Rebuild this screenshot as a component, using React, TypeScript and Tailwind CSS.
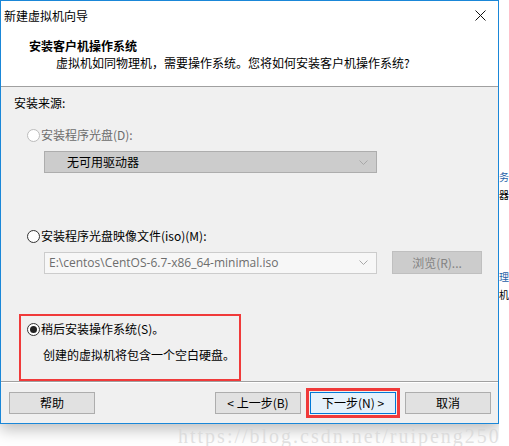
import React from 'react'

const font = { fontFamily: '"Noto Sans CJK SC", "Microsoft YaHei", sans-serif' }

function Radio({ checked, disabled }: { checked?: boolean; disabled?: boolean }) {
  return (
    <span
      className={`flex h-[13px] w-[13px] shrink-0 items-center justify-center rounded-full border bg-white ${
        disabled ? 'border-[#bcbcbc]' : 'border-[#333333]'
      }`}
    >
      {checked && <span className="h-[7px] w-[7px] rounded-full bg-[#222222]" />}
    </span>
  )
}

function Chevron({ color }: { color: string }) {
  return (
    <svg width="9" height="5" viewBox="0 0 9 5">
      <path d="M0.5 0.5 L4.5 4.5 L8.5 0.5" fill="none" stroke={color} strokeWidth="1" />
    </svg>
  )
}

function Button({ children, primary }: { children: React.ReactNode; primary?: boolean }) {
  return (
    <div
      className={`flex h-[22px] w-[86px] items-center justify-center border text-[12px] text-black ${
        primary ? 'border-[#0078d7] bg-[#e5f1fb]' : 'border-[#adadad] bg-[#e1e1e1]'
      }`}
    >
      {children}
    </div>
  )
}

export default function App() {
  return (
    <div className="relative flex h-[446px] w-[509px] overflow-hidden bg-white" style={font}>
      <div className="flex h-[424px] w-[499px] shrink-0 flex-col border border-[#1a87d8] bg-[#f0f0f0] shadow-[0_6px_14px_rgba(0,0,0,0.25)]">
        {/* title bar */}
        <div className="flex h-[29px] items-center justify-between bg-white pl-[3px] pr-[8px]">
          <span className="text-[12px] text-black">新建虚拟机向导</span>
          <svg width="11" height="11" viewBox="0 0 11 11" className="mr-[4px]">
            <path d="M0.5 0.5 L10.5 10.5 M10.5 0.5 L0.5 10.5" stroke="#111" strokeWidth="1" />
          </svg>
        </div>

        {/* header */}
        <div className="flex h-[57px] flex-col border-b border-[#a0a0a0] bg-white pl-[28px] pt-[7px]">
          <span className="text-[12px] font-bold leading-[18px] text-black">安装客户机操作系统</span>
          <span className="pl-[27px] text-[12px] leading-[16px] text-black">
            虚拟机如同物理机，需要操作系统。您将如何安装客户机操作系统?
          </span>
        </div>

        {/* body */}
        <div className="flex h-[294px] flex-col pl-[13px] pt-[8px]">
          <span className="text-[12px] leading-[16px] text-black">安装来源:</span>

          <div className="mt-[16px] flex items-center gap-[1px] pl-[13px]">
            <Radio disabled />
            <span className="text-[12px] leading-[16px] text-[#6d6d6d]">安装程序光盘(D):</span>
          </div>
          <div className="ml-[30px] mt-[8px] flex h-[22px] w-[333px] items-center justify-between border border-[#adadad] bg-[#cccccc] pl-[22px] pr-[8px]">
            <span className="text-[12px] text-black">无可用驱动器</span>
            <Chevron color="#a8a8a8" />
          </div>

          <div className="mt-[55px] flex items-center gap-[1px] pl-[13px]">
            <Radio />
            <span className="text-[12px] leading-[16px] text-black">安装程序光盘映像文件(iso)(M):</span>
          </div>
          <div className="mt-[7px] flex items-center gap-[15px] pl-[30px]">
            <div className="flex h-[22px] w-[333px] items-center justify-between border border-[#cccccc] bg-[#f7f7f7] pl-[4px] pr-[8px]">
              <span className="text-[12px] text-[#6d6d6d]" style={{ fontFamily: '"Open Sans", "Noto Sans", sans-serif' }}>
                E:\centos\CentOS-6.7-x86_64-minimal.iso
              </span>
              <Chevron color="#a8a8a8" />
            </div>
            <div className="flex h-[23px] w-[90px] items-center justify-center border border-[#bfbfbf] bg-[#cccccc] text-[12px] text-[#838383]">
              浏览(R)...
            </div>
          </div>

          <div className="ml-[5px] mt-[40px] flex h-[67px] w-[222px] flex-col border-2 border-[#f03a3a] pl-[6px] pt-[5px]">
            <div className="flex items-center gap-[1px]">
              <Radio checked />
              <span className="text-[12px] leading-[16px] text-black">稍后安装操作系统(S)。</span>
            </div>
            <span className="mt-[10px] pl-[16px] text-[12px] leading-[16px] text-black">
              创建的虚拟机将包含一个空白硬盘。
            </span>
          </div>
        </div>

        {/* footer */}
        <div className="flex flex-1 items-center justify-between border-t border-[#a0a0a0] pl-[8px] pr-[7px] shadow-[inset_0_1px_0_#ffffff]">
          <Button>帮助</Button>
          <div className="flex items-center gap-[9px]">
            <Button>&lt; 上一步(B)</Button>
            <div className="-mx-[4px] border-[3px] border-[#f03a3a] p-px">
              <Button primary>下一步(N) &gt;</Button>
            </div>
            <Button>取消</Button>
          </div>
        </div>
      </div>

      {/* desktop behind the dialog */}
      <div className="flex flex-1 flex-col overflow-hidden bg-white pt-[168px] text-[10px] leading-[18px]">
        <span className="text-[#1e5fa8]">务</span>
        <span className="text-black">器</span>
        <span className="mt-[64px] text-[#1e5fa8]">理</span>
        <span className="text-black">机</span>
      </div>

      <span
        className="absolute left-[178px] top-[421px] text-[20px] tracking-[2px] text-[#d4d4d4]/70"
        style={{ fontFamily: '"Liberation Serif", serif' }}
      >
        https://blog.csdn.net/ruipeng250
      </span>
    </div>
  )
}
